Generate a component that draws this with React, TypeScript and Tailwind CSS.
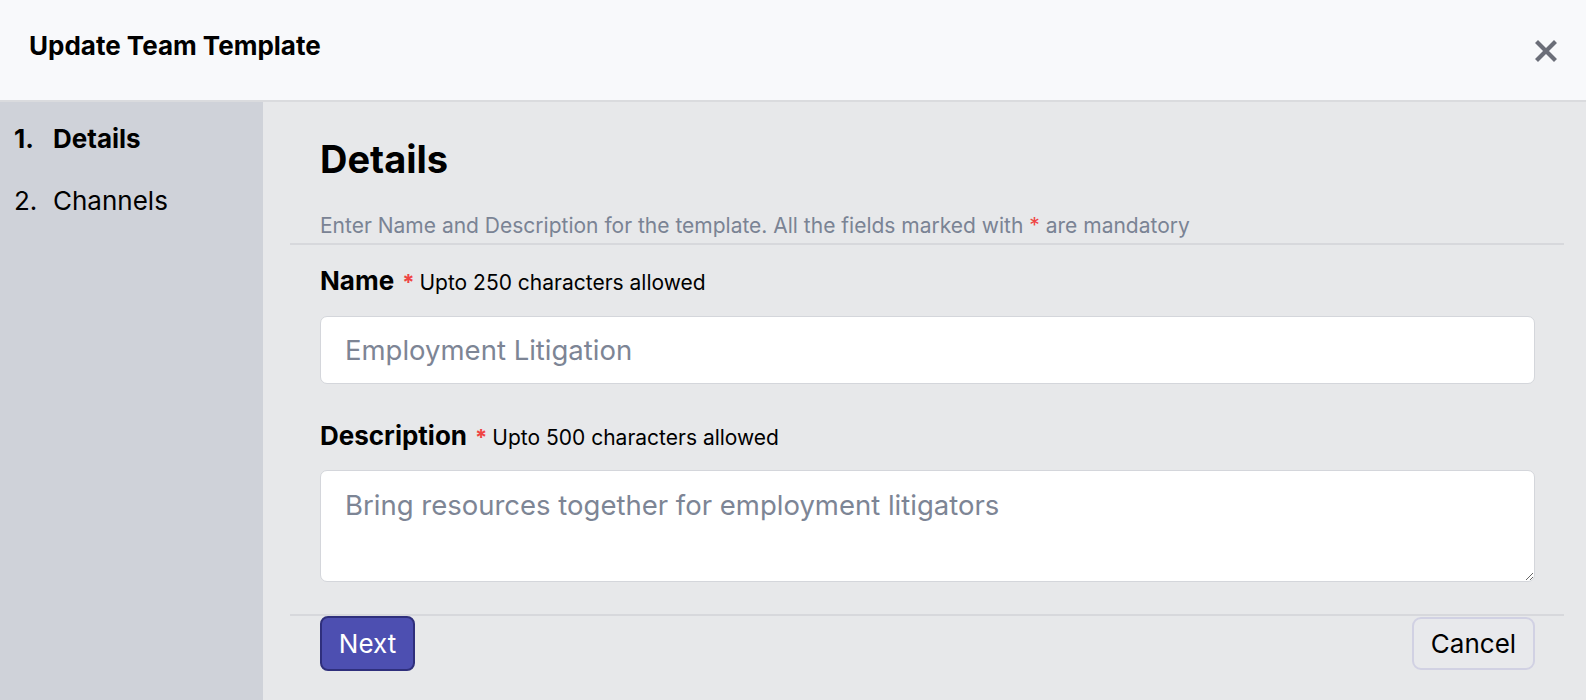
function FieldLabel({ label, hint }: { label: string; hint: string }) {
  return (
    <div className="flex h-[30px] items-baseline leading-[30px]">
      <span className="text-[26px] font-bold text-black">{label}</span>
      <span className="ml-[8px] text-[22px] font-bold text-[#ef4444]">*</span>
      <span className="ml-[5px] text-[21px] text-black">{hint}</span>
    </div>
  );
}

function CloseIcon() {
  return (
    <svg width="22" height="22" viewBox="0 0 22 22" fill="none" stroke="currentColor" strokeWidth="4.2" strokeLinecap="square">
      <path d="M3 3 19 19M19 3 3 19" />
    </svg>
  );
}

export default function App() {
  return (
    <div className="flex h-[700px] w-full flex-col overflow-hidden bg-[#e7e8ea] font-['Inter',sans-serif] text-black">
      <header className="flex h-[102px] shrink-0 items-start justify-between border-b-2 border-[#dadbde] bg-[#f8f9fb] pl-[29px] pr-[29px]">
        <h1 className="mt-[30px] text-[26px] font-bold leading-[32px]">Update Team Template</h1>
        <button className="mt-[40px] text-[#6b6e78]" aria-label="Close">
          <CloseIcon />
        </button>
      </header>

      <div className="flex flex-1">
        <aside className="w-[263px] shrink-0 bg-[#cfd2d9] pl-[14px] pt-[20px]">
          <ol className="flex flex-col gap-[28px] text-[26px] leading-[34px]">
            <li className="flex font-bold">
              <span className="w-[39px]">1.</span>Details
            </li>
            <li className="flex">
              <span className="w-[39px]">2.</span>Channels
            </li>
          </ol>
        </aside>

        <main className="flex flex-1 flex-col pl-[27px] pr-[22px]">
          <div className="pl-[30px] pr-[29px] pt-[34px]">
            <h2 className="text-[38px] font-bold leading-[46px]">Details</h2>
            <p className="mt-[30px] text-[21px] leading-[28px] text-[#7a8394]">
              Enter Name and Description for the template. All the fields marked with{" "}
              <span className="text-[#ef4444]">*</span> are mandatory
            </p>
          </div>
          <div className="mt-[3px] border-t-2 border-[#d7d8dc]" />

          <div className="pl-[30px] pr-[29px] pt-[21px]">
            <FieldLabel label="Name" hint="Upto 250 characters allowed" />
            <input
              className="mt-[20px] h-[68px] w-full rounded-[7px] border border-[#d4d6db] bg-white px-[24px] text-[27.5px] text-[#1f2937] placeholder:text-[#7d8595] focus:outline-none"
              placeholder="Employment Litigation"
            />

            <div className="mt-[37px]">
              <FieldLabel label="Description" hint="Upto 500 characters allowed" />
            </div>
            <textarea
              className="mt-[19px] block h-[112px] w-full rounded-[7px] border border-[#d4d6db] bg-white px-[24px] py-[17px] text-[27.5px] leading-[34px] text-[#1f2937] placeholder:text-[#7d8595] focus:outline-none"
              placeholder="Bring resources together for employment litigators"
            />
          </div>

          <div className="mt-[32px] border-t-2 border-[#d7d8dc]" />
          <div className="flex items-start justify-between pl-[30px] pr-[29px]">
            <button className="h-[55px] w-[95px] rounded-[8px] border-2 border-[#2f2f7c] bg-[#4d4fb1] text-[26px] text-white">
              Next
            </button>
            <button className="mt-[1px] h-[53px] w-[123px] rounded-[9px] border-2 border-[#d1d1e3] bg-[#e8e9ec] text-[26px] text-black">
              Cancel
            </button>
          </div>
        </main>
      </div>
    </div>
  );
}
